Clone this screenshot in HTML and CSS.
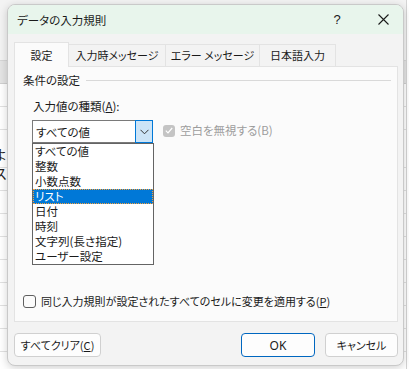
FILE: index.html
```html
<!DOCTYPE html>
<html>
<head>
    <title>データの入力規則</title>
    <link rel="stylesheet" href="styles.css">
</head>
<body>
    <div class="sheet">
        <div class="sheet-top"></div>
        <div class="sheet-head"></div>
        <div class="sheet-row"></div>
        <div class="sheet-row"></div>
        <div class="sheet-row"><span class="cell-text">よ<br>ス</span></div>
        <div class="sheet-row"></div>
        <div class="sheet-row"></div>
        <div class="sheet-row"></div>
        <div class="sheet-row"></div>
        <div class="sheet-row"></div>
        <div class="sheet-row"></div>
        <div class="sheet-row"></div>
        <div class="sheet-row"></div>
        <div class="sheet-row"></div>
    </div>

    <div class="dialog">
        <div class="titlebar">
            <span class="title">データの入力規則</span>
            <span class="tb-btn help">?</span>
            <span class="tb-btn close">
                <svg width="11" height="11" viewBox="0 0 11 11"><path d="M0.5 0.5 L10.5 10.5 M10.5 0.5 L0.5 10.5" stroke="#1a1a1a" stroke-width="1.1" fill="none"/></svg>
            </span>
        </div>
        <div class="dlg-body">
            <div class="tabs">
                <div class="tab active" style="width: 55px">設定</div>
                <div class="tab" style="width: 98px">入力時メッセージ</div>
                <div class="tab" style="width: 95px">エラー メッセージ</div>
                <div class="tab" style="width: 77px">日本語入力</div>
            </div>
            <div class="panel">
                <div class="group-head">
                    <span>条件の設定</span>
                    <span class="group-line"></span>
                </div>
                <div class="field">
                    <div class="field-label">入力値の種類(<u>A</u>):</div>
                    <div class="combo-row">
                        <div class="combo-wrap">
                            <div class="combo">
                                <span class="combo-value">すべての値</span>
                                <span class="combo-btn">
                                    <svg width="9" height="6" viewBox="0 0 9 6"><path d="M0.5 0.8 L4.5 4.8 L8.5 0.8" stroke="#333" stroke-width="1" fill="none"/></svg>
                                </span>
                            </div>
                            <ul class="dropdown">
                                <li>すべての値</li>
                                <li>整数</li>
                                <li>小数点数</li>
                                <li class="selected">リスト</li>
                                <li>日付</li>
                                <li>時刻</li>
                                <li>文字列(長さ指定)</li>
                                <li>ユーザー設定</li>
                            </ul>
                        </div>
                        <div class="check disabled">
                            <span class="box checked">
                                <svg width="8" height="7" viewBox="0 0 8 7"><path d="M0.8 3.6 L3 5.8 L7.2 1" stroke="#fff" stroke-width="1.2" fill="none"/></svg>
                            </span>
                            空白を無視する(B)
                        </div>
                    </div>
                </div>
                <div class="check apply">
                    <span class="box"></span>
                    同じ入力規則が設定されたすべてのセルに変更を適用する(<u>P</u>)
                </div>
            </div>
            <div class="buttons">
                <button class="btn clear">すべてクリア(<u>C</u>)</button>
                <span class="spacer"></span>
                <button class="btn primary">OK</button>
                <button class="btn cancel">キャンセル</button>
            </div>
        </div>
    </div>
</body>
</html>
```

FILE: styles.css
```css
body {
    margin: 0;
    width: 409px;
    height: 369px;
    overflow: hidden;
    position: relative;
    font-family: "Noto Sans CJK JP", "Noto Sans", sans-serif;
    font-feature-settings: "palt";
    font-size: 11px;
    color: #1a1a1a;
    background: #fff;
}

/* spreadsheet behind the dialog */
.sheet { height: 369px; overflow: hidden; border-right: 1px solid #d4d4d4; width: 406px; }
.sheet-top { height: 60px; background: #f3f3f3; border-bottom: 1px solid #d6d6d6; }
.sheet-head { height: 22px; background: #e4e4e4; border-bottom: 1px solid #cfcfcf; }
.sheet-row { height: 22px; border-bottom: 1px solid #e1e1e1; overflow: visible; position: relative; }
.cell-text {
    display: block;
    margin: 15px 0 0 -6px;
    font-size: 14px;
    line-height: 19px;
    color: #222;
}

/* dialog window */
.dialog {
    position: absolute;
    left: 7px;
    top: 4px;
    width: 397px;
    height: 362px;
    box-sizing: border-box;
    border: 1px solid #c9c9c9;
    border-radius: 8px;
    overflow: hidden;
    display: flex;
    flex-direction: column;
    box-shadow: 0 2px 8px rgba(0,0,0,0.18);
    background: #f3f3f3;
}
.titlebar {
    height: 29px;
    background: #e8f5ec;
    display: flex;
    align-items: center;
}
.title { flex: 1; padding-left: 9px; font-size: 11.5px; }
.tb-btn {
    width: 40px;
    height: 29px;
    display: flex;
    align-items: center;
    justify-content: center;
}
.help { font-size: 13px; margin-right: 6px; font-family: "Liberation Sans", sans-serif; }

.dlg-body {
    flex: 1;
    display: flex;
    flex-direction: column;
    padding: 8px 5px 8px 6px;
}

/* tabs */
.tabs { display: flex; align-items: flex-end; height: 24px; }
.tab {
    box-sizing: border-box;
    height: 22px;
    border: 1px solid #e3e3e3;
    border-bottom: none;
    margin-right: -1px;
    background: #f3f3f3;
    text-align: center;
    line-height: 21px;
}
.tab.active {
    height: 25px;
    margin-bottom: -1px;
    background: #fbfbfb;
    position: relative;
    z-index: 1;
    line-height: 24px;
}

.panel {
    height: 256px;
    box-sizing: border-box;
    border: 1px solid #e3e3e3;
    background: #fbfbfb;
    padding: 6px 6px 0 8px;
    display: flex;
    flex-direction: column;
}
.group-head { display: flex; align-items: center; gap: 6px; line-height: 15px; font-size: 11.5px; }
.group-line { flex: 1; height: 1px; background: #d9d9d9; }

.field { margin-left: 10px; }
.field-label { margin-top: 11px; line-height: 15px; font-size: 11.5px; }
.combo-row { display: flex; align-items: flex-start; margin: 6px 0 0 -1px; }
.combo-wrap { position: relative; }
.combo {
    width: 121px;
    height: 23px;
    box-sizing: border-box;
    border: 1px solid #7a7a7a;
    background: #fff;
    display: flex;
    align-items: center;
}
.combo-value { flex: 1; padding-left: 3px; font-size: 11.5px; }
.combo-btn {
    width: 18px;
    height: 23px;
    box-sizing: border-box;
    margin: -1px -1px -1px 0;
    border: 1px solid #0078d7;
    background: #cce4f7;
    display: flex;
    align-items: center;
    justify-content: center;
}

.dropdown {
    position: absolute;
    top: 23px;
    left: 0;
    width: 122px;
    box-sizing: border-box;
    margin: 0;
    padding: 0;
    list-style: none;
    background: #fff;
    border: 1px solid #646464;
    z-index: 2;
    font-size: 11.5px;
}
.dropdown li { line-height: 15px; height: 15px; padding-left: 2px; }
.dropdown li.selected {
    background: #0078d7;
    color: #fff;
    outline: 1px dotted #f7a13a;
    outline-offset: -1px;
}

/* checkboxes */
.check { display: flex; align-items: center; line-height: 15px; }
.box {
    width: 13px;
    height: 13px;
    box-sizing: border-box;
    border: 1px solid #5f5f5f;
    border-radius: 3px;
    margin-right: 5px;
    display: flex;
    align-items: center;
    justify-content: center;
}
.check.disabled { margin: 3px 0 0 10px; color: #9d9d9d; font-size: 11.5px; }
.check.disabled .box { width: 12px; height: 12px; border: none; background: #c4c4c4; }
.check.apply { margin-top: auto; margin-bottom: 12px; }

/* buttons */
.buttons { display: flex; margin-top: 11px; gap: 10px; }
.spacer { flex: 1; }
.btn {
    height: 24px;
    box-sizing: border-box;
    border: 1px solid #d0d0d0;
    border-radius: 4px;
    background: #fdfdfd;
    font-family: inherit;
    font-feature-settings: "palt";
    font-size: 11px;
    color: #1a1a1a;
    padding: 0;
}
.btn.clear { width: 87px; }
.btn.primary { width: 74px; border-color: #0067c0; font-family: "Noto Sans", sans-serif; font-size: 12px; }
.btn.cancel { width: 73px; }
```
